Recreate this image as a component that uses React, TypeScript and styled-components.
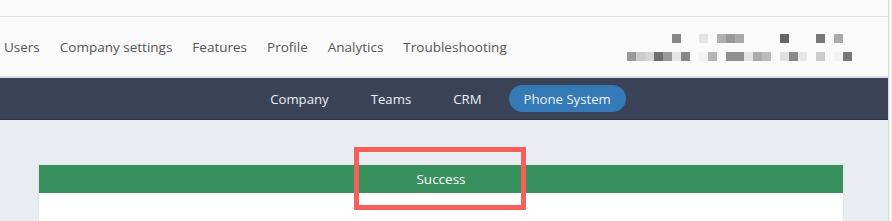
import React from 'react'
import styled, { createGlobalStyle } from 'styled-components'

const GlobalStyle = createGlobalStyle`
  body {
    margin: 0;
    background: #f4f4f4;
    font-family: 'Open Sans', 'Noto Sans', sans-serif;
  }
`

const mosaic: { row: number; col: number; c: string }[] = [
  { row: 0, col: 5, c: '#888' },
  { row: 0, col: 8, c: '#e3e3e3' },
  { row: 0, col: 10, c: '#b0b0b0' },
  { row: 0, col: 11, c: '#999' },
  { row: 0, col: 12, c: '#aaa' },
  { row: 0, col: 17, c: '#666' },
  { row: 0, col: 21, c: '#777' },
  { row: 0, col: 23, c: '#aaa' },
  { row: 1, col: 0, c: '#999' },
  { row: 1, col: 1, c: '#ccc' },
  { row: 1, col: 2, c: '#d5d5d5' },
  { row: 1, col: 3, c: '#6e6e6e' },
  { row: 1, col: 4, c: '#9a9a9a' },
  { row: 1, col: 5, c: '#e5e5e5' },
  { row: 1, col: 6, c: '#888' },
  { row: 1, col: 8, c: '#f3f3f3' },
  { row: 1, col: 9, c: '#b5b5b5' },
  { row: 1, col: 11, c: '#909090' },
  { row: 1, col: 12, c: '#909090' },
  { row: 1, col: 13, c: '#e3e3e3' },
  { row: 1, col: 14, c: '#aaa' },
  { row: 1, col: 15, c: '#bbb' },
  { row: 1, col: 17, c: '#e0e0e0' },
  { row: 1, col: 18, c: '#888' },
  { row: 1, col: 19, c: '#e7e7e7' },
  { row: 1, col: 21, c: '#ccc' },
  { row: 1, col: 23, c: '#f3f3f3' },
  { row: 1, col: 24, c: '#777' },
]

const topLinks = ['Users', 'Company settings', 'Features', 'Profile', 'Analytics', 'Troubleshooting']
const subLinks = ['Company', 'Teams', 'CRM', 'Phone System']

const App = () => {
  return (
    <Page>
      <GlobalStyle />
      <TopStrip />
      <NavBar>
        <NavLinks>
          {topLinks.map((l) => (
            <NavLink key={l}>{l}</NavLink>
          ))}
        </NavLinks>
        <Blurred width="225" height="27" viewBox="0 0 225 27">
          {mosaic.map((m, i) => (
            <rect key={i} x={m.col * 9} y={m.row * 18} width="9" height="9" fill={m.c} />
          ))}
        </Blurred>
      </NavBar>
      <SubBar>
        {subLinks.map((l) => (
          <SubLink key={l} active={l === 'Phone System'}>
            {l}
          </SubLink>
        ))}
      </SubBar>
      <Content>
        <Panel>
          <PanelHeader>Success</PanelHeader>
          <PanelBody />
        </Panel>
        <Highlight />
      </Content>
    </Page>
  )
}

export default App

const Highlight = styled.div`
  position: absolute;
  left: 354px;
  top: 27px;
  width: 162px;
  height: 53px;
  border: 5px solid #f7605a;
`

const PanelBody = styled.div`
  height: 40px;
  background: #fff;
`

const PanelHeader = styled.div`
  height: 28px;
  background: #38915c;
  color: #fff;
  font-size: 13.5px;
  display: flex;
  align-items: center;
  justify-content: center;
`

const Panel = styled.div`
  background: #fff;
  box-shadow: 0 0 2px rgba(0, 0, 0, 0.08);
`

const Content = styled.div`
  position: relative;
  background: #e9edf2;
  padding: 45px 45px 0 39px;
  height: 101px;
  box-sizing: border-box;
  overflow: hidden;
`

const SubLink = styled.div<{ active?: boolean }>`
  height: 27px;
  display: flex;
  align-items: center;
  padding: 0 15px;
  border-radius: 14px;
  font-size: 13.2px;
  color: #eef0f3;
  background: ${(p) => (p.active ? '#337ab7' : 'transparent')};
`

const SubBar = styled.div`
  height: 41px;
  background: #3a4255;
  border-bottom: 1px solid #2b303c;
  display: flex;
  align-items: center;
  justify-content: center;
  gap: 12px;
  padding-right: 7px;
`

const Blurred = styled.svg`
  display: block;
  margin-right: 36px;
  margin-top: 1px;
`

const NavLink = styled.div`
  font-size: 13.5px;
  color: #555;
`

const NavLinks = styled.div`
  display: flex;
  gap: 20px;
  padding-left: 4px;
`

const NavBar = styled.div`
  height: 59px;
  background: #fafafa;
  border-bottom: 2px solid #dcdcdc;
  display: flex;
  align-items: center;
  justify-content: space-between;
`

const TopStrip = styled.div`
  height: 16px;
  background: #fafafa;
  border-bottom: 1px solid #dedede;
`

const Page = styled.div`
  width: 888px;
  border-right: 1px solid #dcdcdc;
`
